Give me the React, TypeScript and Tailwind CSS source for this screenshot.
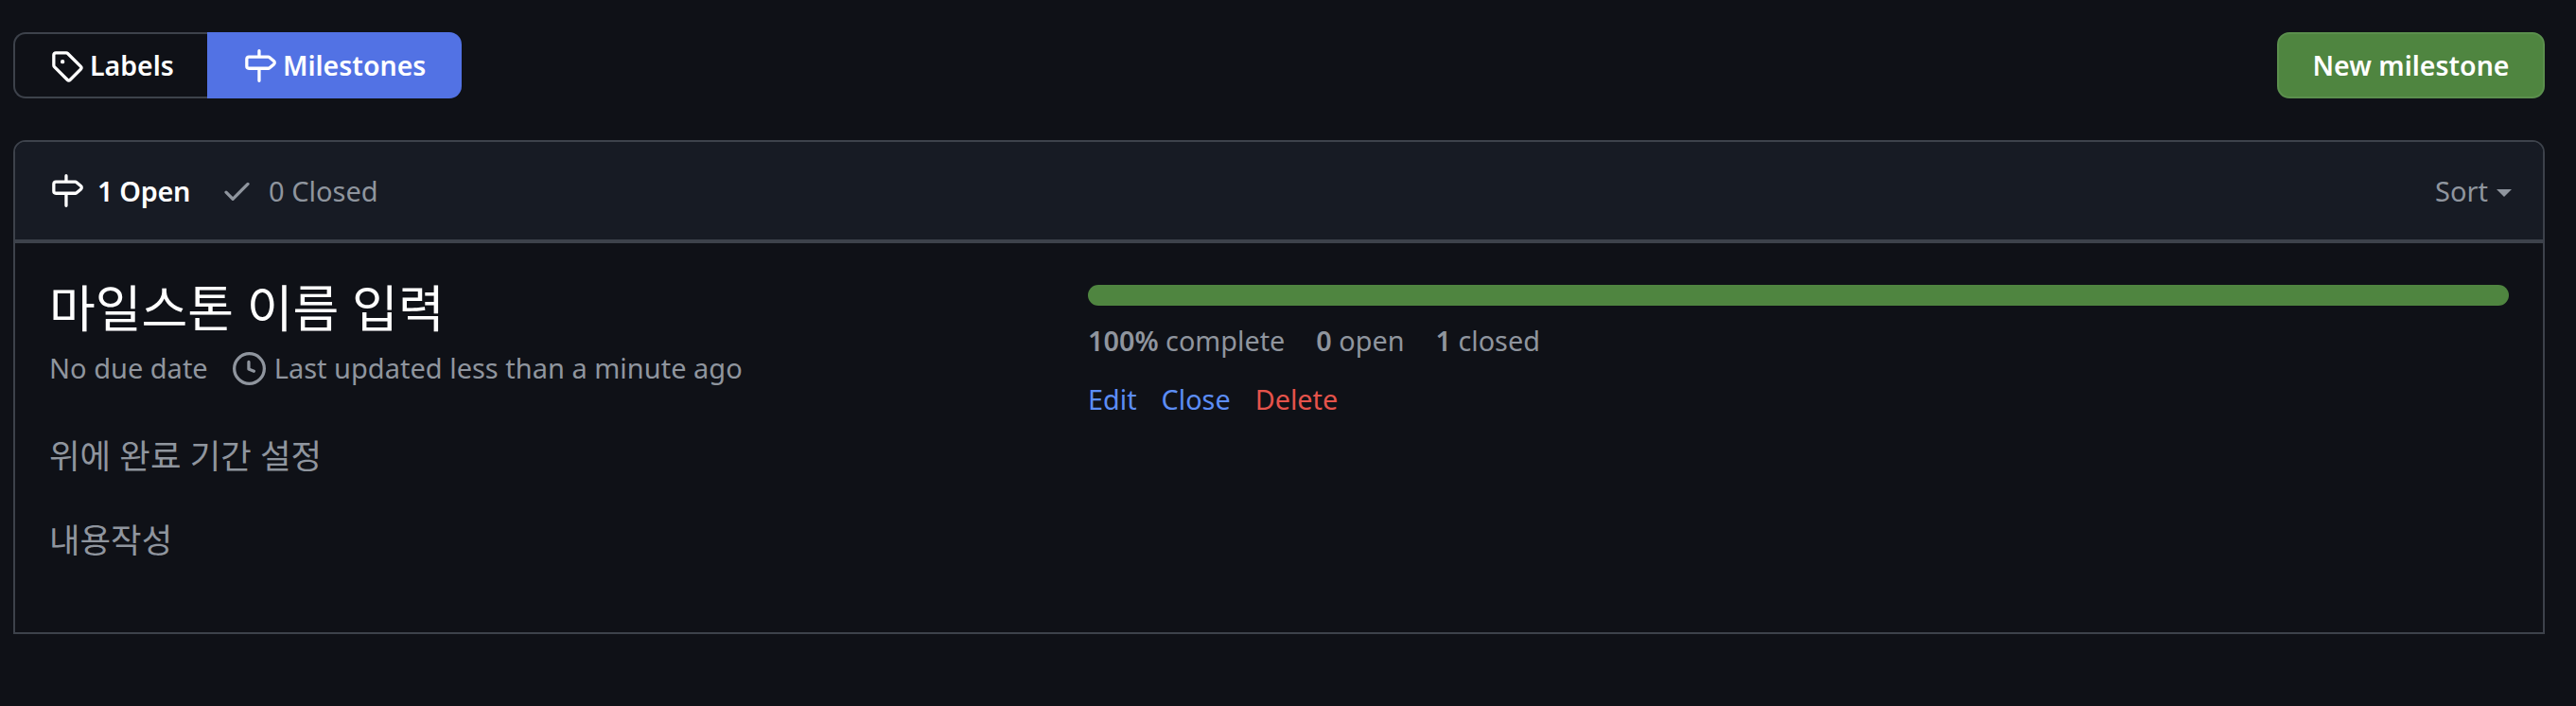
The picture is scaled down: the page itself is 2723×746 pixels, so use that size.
const milestone = "M7.75 0a.75.75 0 0 1 .75.75V3h3.634c.414 0 .814.147 1.13.414l2.07 1.75a1.75 1.75 0 0 1 0 2.672l-2.07 1.75a1.75 1.75 0 0 1-1.13.414H8.5v5.25a.75.75 0 0 1-1.5 0V10H2.75A1.75 1.75 0 0 1 1 8.25v-3.5C1 3.784 1.784 3 2.75 3H7V.75A.75.75 0 0 1 7.75 0Zm4.384 8.5a.25.25 0 0 0 .161-.06l2.07-1.75a.25.25 0 0 0 0-.38l-2.07-1.75a.25.25 0 0 0-.161-.06H2.75a.25.25 0 0 0-.25.25v3.5c0 .138.112.25.25.25h9.384Z";
const tag = "M1 7.775V2.75C1 1.784 1.784 1 2.75 1h5.025c.464 0 .91.184 1.238.513l6.25 6.25a1.75 1.75 0 0 1 0 2.474l-5.026 5.026a1.75 1.75 0 0 1-2.474 0l-6.25-6.25A1.752 1.752 0 0 1 1 7.775Zm1.5 0c0 .066.026.13.073.177l6.25 6.25a.25.25 0 0 0 .354 0l5.025-5.025a.25.25 0 0 0 0-.354l-6.25-6.25a.25.25 0 0 0-.177-.073H2.75a.25.25 0 0 0-.25.25ZM6 5a1 1 0 1 1 0 2 1 1 0 0 1 0-2Z";
const check = "M13.78 4.22a.75.75 0 0 1 0 1.06l-7.25 7.25a.75.75 0 0 1-1.06 0L2.22 9.28a.751.751 0 0 1 .018-1.042.751.751 0 0 1 1.042-.018L6 10.94l6.72-6.72a.75.75 0 0 1 1.06 0Z";
const clock = "M8 0a8 8 0 1 1 0 16A8 8 0 0 1 8 0ZM1.5 8a6.5 6.5 0 1 0 13 0 6.5 6.5 0 0 0-13 0Zm7-3.25v2.992l2.028.812a.75.75 0 0 1-.557 1.392l-2.5-1A.751.751 0 0 1 7 8.25v-3.5a.75.75 0 0 1 1.5 0Z";

function Icon({ d, className }: { d: string; className?: string }) {
  return (
    <svg viewBox="0 0 16 16" fill="currentColor" className={className}>
      <path d={d} />
    </svg>
  );
}

export default function App() {
  return (
    <div className="min-h-[746px] bg-[#0f1117] pl-[14px] pr-[33px] pt-[34px] font-['Noto_Sans','Noto_Sans_CJK_KR',sans-serif] text-[#8f959e]">
      <div className="flex items-start justify-between">
        <div className="flex h-[70px]">
          <div className="flex w-[205px] items-center rounded-l-[13px] border-2 border-r-0 border-[#3d424b] pl-[37px] text-[28.5px] font-semibold text-white">
            <Icon d={tag} className="mr-[7px] h-[35px] w-[35px] shrink-0" />
            Labels
          </div>
          <div className="flex w-[269px] items-center rounded-r-[13px] bg-[#5272e4] pl-[38px] text-[28.5px] font-semibold text-white">
            <Icon d={milestone} className="mr-[7px] h-[35px] w-[35px] shrink-0" />
            Milestones
          </div>
        </div>
        <div className="flex h-[70px] w-[283px] items-center justify-center rounded-[13px] border-2 border-[#5b8f4d] bg-[#4f8540] text-[28.5px] font-semibold text-white">
          New milestone
        </div>
      </div>

      <div className="mt-[44px] h-[522px] rounded-t-[13px] border-2 border-[#3d424b]">
        <div className="flex h-[107px] items-center justify-between rounded-t-[11px] border-b-[4px] border-[#3d424b] bg-[#171b24] pl-[37px] pr-[33px] text-[29px]">
          <div className="flex items-center">
            <Icon d={milestone} className="h-[35px] w-[35px] text-white" />
            <span className="ml-[15px] text-[28.8px] font-semibold tracking-[-0.3px] text-white">1 Open</span>
            <Icon d={check} className="ml-[32px] h-[35px] w-[35px]" />
            <span className="ml-[16px]">0 Closed</span>
          </div>
          <div className="flex items-center">
            <span>Sort</span>
            <span className="ml-[9px] mt-[4px] h-0 w-0 border-x-[8px] border-t-[8px] border-x-transparent border-t-[#8f959e]" />
          </div>
        </div>
        <div className="flex pl-[36px]">
          <div className="w-[1098px] shrink-0 pt-[36px]">
            <div className="h-[66px] text-[53px] leading-[66px] text-white">마일스톤 이름 입력</div>
            <div className="mt-[10px] flex h-[40px] items-center text-[29px]">
              <span>No due date</span>
              <Icon d={clock} className="ml-[26px] mr-[9px] h-[35px] w-[35px]" />
              <span>Last updated less than a minute ago</span>
            </div>
            <p className="mt-[47px] h-[50px] text-[35.4px] leading-[50px]">위에 완료 기간 설정</p>
            <p className="mt-[39px] h-[50px] text-[35.4px] leading-[50px]">내용작성</p>
          </div>
          <div className="min-w-0 flex-1 pr-[36px] pt-[44px]">
            <div className="h-[22px] rounded-full bg-[#4f8540]" />
            <div className="mt-[17px] flex h-[40px] items-center gap-[33px] text-[28.8px]">
              <span><b className="font-semibold">100%</b> complete</span>
              <span><b className="font-semibold">0</b> open</span>
              <span><b className="font-semibold">1</b> closed</span>
            </div>
            <div className="mt-[22px] flex h-[40px] items-center gap-[26px] text-[28.8px]">
              <span className="text-[#5c8df6]">Edit</span>
              <span className="text-[#5c8df6]">Close</span>
              <span className="text-[#e5534b]">Delete</span>
            </div>
          </div>
        </div>
      </div>
    </div>
  );
}
